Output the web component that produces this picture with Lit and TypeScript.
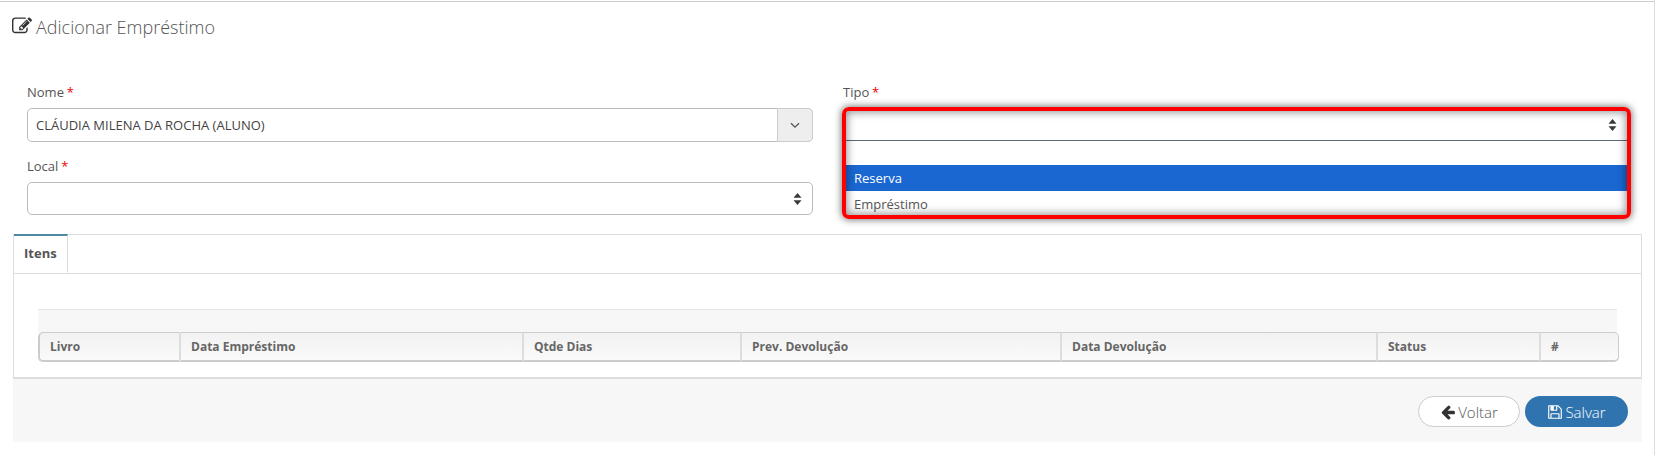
import { LitElement, html, css, svg } from "lit";
import { customElement } from "lit/decorators.js";

const updown = html`<svg class="updown" viewBox="0 0 9 12" width="9" height="12"><path d="M4.500 0 L8.500 4.800 H0.500 Z M4.500 12 L0.500 7.200 H8.500 Z" fill="#3a3a3a"/></svg>`;
const icon = (d: string, cls: string) => html`<svg class=${cls} viewBox="0 0 1792 1792">${svg`<path d=${d} fill="currentColor"/>`}</svg>`;
const EDIT = "M888 1184l116-116-152-152-116 116v56h96v96h56zm440-720q-16-16-33 1l-350 350q-17 17-1 33t33-1l350-350q17-17 1-33zm80 594v190q0 119-84.500 203.500t-203.500 84.500h-832q-119 0-203.500-84.500t-84.500-203.500v-832q0-119 84.500-203.500t203.500-84.500h832q63 0 117 25 15 7 18 23 3 17-9 29l-49 49q-14 14-32 8-23-6-45-6h-832q-66 0-113 47t-47 113v832q0 66 47 113t113 47h832q66 0 113-47t47-113v-126q0-13 9-22l64-64q15-15 35-7t20 29zm-96-738l288 288-672 672h-288v-288zm444 132l-92 92-288-288 92-92q28-28 68-28t68 28l152 152q28 28 28 68t-28 68z";
const BACK = "M1664 896v128q0 53-32.500 90.500t-84.500 37.500h-704l293 294q38 36 38 90t-38 90l-75 76q-37 37-90 37-52 0-91-37l-651-652q-37-37-37-90 0-52 37-91l651-650q38-38 91-38 52 0 90 38l75 74q38 38 38 91t-38 91l-293 293h704q52 0 84.500 37.500t32.500 90.500z";
const SAVE = "M512 1536h768v-384h-768v384zm896 0h128v-896q0-14-10-38.500t-20-34.500l-281-281q-10-10-34-20t-39-10v416q0 40-28 68t-68 28h-576q-40 0-68-28t-28-68v-416h-128v1280h128v-416q0-40 28-68t68-28h832q40 0 68 28t28 68v416zm-384-928v-320q0-13-9.500-22.500t-22.500-9.500h-192q-13 0-22.500 9.500t-9.500 22.500v320q0 13 9.500 22.500t22.500 9.500h192q13 0 22.500-9.500t9.500-22.500zm640 32v928q0 40-28 68t-68 28h-1344q-40 0-68-28t-28-68v-1344q0-40 28-68t68-28h928q40 0 88 20t76 48l280 280q28 28 48 76t20 88z";

const COLS: [string, number][] = [
  ["Livro", 143], ["Data Empréstimo", 343], ["Qtde Dias", 218], ["Prev. Devolução", 320],
  ["Data Devolução", 316], ["Status", 163], ["#", 78],
];

@customElement("app-root")
export class AppRoot extends LitElement {
  static styles = css`
    :host { display: block; width: 1658px; height: 455px; box-sizing: border-box; background: #fff; overflow: hidden;
      font-family: "Open Sans", sans-serif; font-size: 13px; color: #555; }
    * { box-sizing: border-box; }
    .page { height: 455px; margin-right: 3px; padding: 1px 0 0 13px; border-right: 1px solid #ddd; }
    .topline { height: 1px; background: #ccc; margin-left: -13px; }
    .title { display: flex; align-items: center; gap: 3px; height: 51px; padding-bottom: 2px; font-size: 18px; font-weight: 300; color: #555; }
    .title .ed { width: 20px; height: 20px; color: #333; margin-left: -1px; margin-right: 1px; margin-bottom: 1px; }
    .form { display: grid; grid-template-columns: 786px 787px; column-gap: 30px; padding: 29px 0 0 14px; height: 181px; }
    .col { display: flex; flex-direction: column; }
    .label { height: 26px; line-height: 20px; font-size: 13px; color: #555; }
    .req { color: #e00; margin-left: -0.5px; }
    .control { border: 1px solid #bbb; border-radius: 5px; background: #fff; display: flex; align-items: center; justify-content: space-between; }
    .nome { height: 34px; margin-bottom: 14px; font-size: 13px; padding-left: 8px; position: relative; color: #444; }
    .addon { position: absolute; right: -1px; top: -1px; bottom: -1px; width: 36px; background: #eee; border: 1px solid #ccc; border-radius: 0 5px 5px 0; display: flex; align-items: center; justify-content: center; }
    .local { height: 33px; padding-right: 10px; justify-content: flex-end; }
    .tipo { position: relative; height: 34px; padding-right: 12px; justify-content: flex-end; border-radius: 5px; }
    .list { position: absolute; left: -1px; right: -1px; top: 31px; height: 77px; background: #fff; border-top: 1px solid #5a6a7a; font-size: 13px; color: #555; }
    .opt { height: 25px; line-height: 27px; padding-left: 11px; }
    .opt.first { height: 24px; }
    .opt.sel { height: 26px; line-height: 26px; background: #1a67d2; color: #fff; }
    .hl { position: absolute; left: -2px; right: -2px; top: -2px; height: 112px; border: 4px solid #f00; border-radius: 7px; pointer-events: none;
      box-shadow: 0 0 7px 1px rgba(0,0,0,.5), inset 0 0 8px 1px rgba(0,0,0,.45); }
    .tabs { width: 1629px; height: 145px; border: 1px solid #ddd; border-bottom-width: 2px; }
    .tabbar { height: 39px; display: flex; border-bottom: 1px solid #ddd; }
    .tab { width: 54px; height: 39px; border-top: 2px solid #4f8aa3; border-right: 1px solid #ddd; background: #fff; font-weight: 700; font-size: 13px; color: #555; padding: 8px 0 0 10px; margin-top: -1px; border-bottom: 1px solid #fff; }
    .body { padding: 35px 0 0 24px; }
    .toolbar { width: 1579px; height: 23px; background: #f7f7f7; border-top: 1px solid #e6e6e6; }
    table { border-collapse: separate; border-spacing: 0; table-layout: fixed; width: 1581px; height: 30px; }
    th { text-align: left; font-size: 12px; font-weight: 700; color: #666; padding: 0 0 0 10px; height: 30px;
      background: linear-gradient(#f2f2f2, #fafafa); border-top: 1px solid #ccc; border-bottom: 2px solid #ccc; border-right: 2px solid #ddd; }
    th:first-child { border-left: 2px solid #ccc; border-radius: 5px 0 0 5px; }
    th:last-child { border-right: 1px solid #ccc; border-radius: 0 5px 5px 0; }
    .footer { width: 1629px; height: 63px; background: #f7f7f7; display: flex; justify-content: flex-end; align-items: flex-start; gap: 5px; padding: 17px 14px 0 0; }
    .btn { width: 103px; height: 31px; border-radius: 16px; display: flex; align-items: center; justify-content: center; gap: 2px; font-size: 15px; font-weight: 300; }
    .btn svg { width: 16px; height: 16px; }
    .back { width: 102px; background: #fff; border: 1px solid #ccc; color: #555; }
    .back svg { color: #333; }
    .save { background: #2f74ae; color: #fff; }
  `;

  render() {
    return html`<div class="page">
      <div class="topline"></div>
      <div class="title">${icon(EDIT, "ed")}<span>Adicionar Empréstimo</span></div>
      <div class="form">
        <div class="col">
          <div class="label">Nome <span class="req">*</span></div>
          <div class="control nome">CLÁUDIA MILENA DA ROCHA (ALUNO)
            <span class="addon"><svg width="10" height="7" viewBox="0 0 10 7"><path d="M1 1.200 L5 5.200 L9 1.200" fill="none" stroke="#555" stroke-width="1.300"/></svg></span>
          </div>
          <div class="label">Local <span class="req">*</span></div>
          <div class="control local">${updown}</div>
        </div>
        <div class="col">
          <div class="label">Tipo <span class="req">*</span></div>
          <div class="control tipo">${updown}
            <div class="list">
              <div class="opt first"></div>
              <div class="opt sel">Reserva</div>
              <div class="opt">Empréstimo</div>
            </div>
            <div class="hl"></div>
          </div>
        </div>
      </div>
      <div class="tabs">
        <div class="tabbar"><div class="tab">Itens</div></div>
        <div class="body">
          <div class="toolbar"></div>
          <table>
            <colgroup>${COLS.map(([, w]) => html`<col style="width:${w}px">`)}</colgroup>
            <tr>${COLS.map(([t]) => html`<th>${t}</th>`)}</tr>
          </table>
        </div>
      </div>
      <div class="footer">
        <div class="btn back">${icon(BACK, "")}<span>Voltar</span></div>
        <div class="btn save">${icon(SAVE, "")}<span>Salvar</span></div>
      </div>
    </div>`;
  }
}
